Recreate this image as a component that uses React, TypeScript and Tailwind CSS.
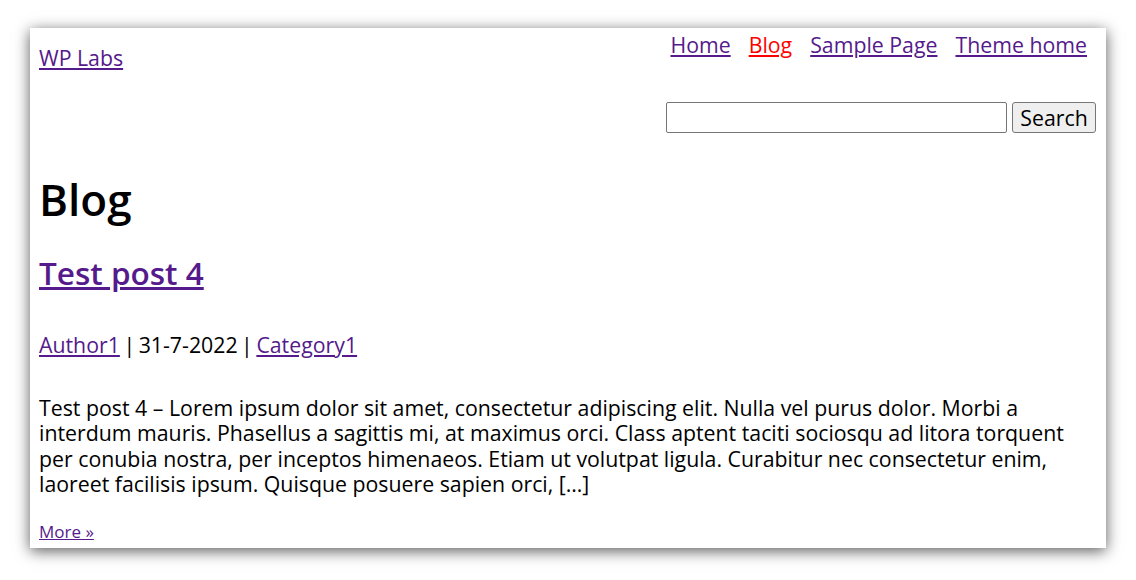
import React from "react";

const font = { fontFamily: '"Open Sans", "Noto Sans", sans-serif' };

export default function App() {
  return (
    <div className="min-h-[580px] bg-white pt-[28px] pl-[30px]" style={font}>
      <div className="w-[1076px] h-[520px] overflow-hidden bg-white text-black shadow-[0_3px_14px_rgba(0,0,0,0.65)]">
        <header className="flex justify-between pl-[9px] pr-[10px]">
          <a href="#" className="mt-[17px] text-[21.3px] leading-[25.3px] text-[#551a8b] underline">
            WP Labs
          </a>
          <div className="flex flex-col items-end">
            <nav className="mt-[4px] pr-[9px] flex gap-[18px] text-[21.3px] leading-[25.3px]">
              <a href="#" className="text-[#551a8b] underline">Home</a>
              <a href="#" className="text-[#ff0000] underline">Blog</a>
              <a href="#" className="text-[#551a8b] underline">Sample Page</a>
              <a href="#" className="text-[#551a8b] underline">Theme home</a>
            </nav>
            <form className="mt-[44.7px] flex gap-[5px]" onSubmit={(e) => e.preventDefault()}>
              <input
                type="text"
                className="w-[341px] h-[31px] border border-[#767676] rounded-[2px] bg-white px-1 text-[18px]"
              />
              <button
                type="submit"
                className="w-[84px] h-[31px] border border-[#767676] rounded-[3px] bg-[#efefef] text-[21.3px] leading-none text-black flex items-center justify-center"
              >
                Search
              </button>
            </form>
          </div>
        </header>

        <main className="px-[9px]">
          <h1 className="mt-[40.5px] text-[44px] leading-[52.8px] font-semibold">Blog</h1>
          <article>
            <h2 className="mt-[28.1px] text-[31.5px] leading-[38.4px] font-semibold">
              <a href="#" className="text-[#551a8b] underline">Test post 4</a>
            </h2>
            <div className="mt-[39px] text-[21.3px] leading-[25.3px] [word-spacing:-2px]">
              <a href="#" className="text-[#551a8b] underline">Author1</a> | 31-7-2022 |{" "}
              <a href="#" className="text-[#551a8b] underline">Category1</a>
            </div>
            <p className="mt-[38px] text-[21.3px] leading-[25.3px] pr-[2px]">
              Test post 4 – Lorem ipsum dolor sit amet, consectetur adipiscing elit. Nulla vel purus dolor. Morbi a
              interdum mauris. Phasellus a sagittis mi, at maximus orci. Class aptent taciti sociosqu ad litora torquent
              per conubia nostra, per inceptos himenaeos. Etiam ut volutpat ligula. Curabitur nec consectetur enim,
              laoreet facilisis ipsum. Quisque posuere sapien orci, […]
            </p>
            <div className="mt-[26.1px] text-[17px] leading-[20px]">
              <a href="#" className="text-[#551a8b] underline">More »</a>
            </div>
          </article>
        </main>
      </div>
    </div>
  );
}
